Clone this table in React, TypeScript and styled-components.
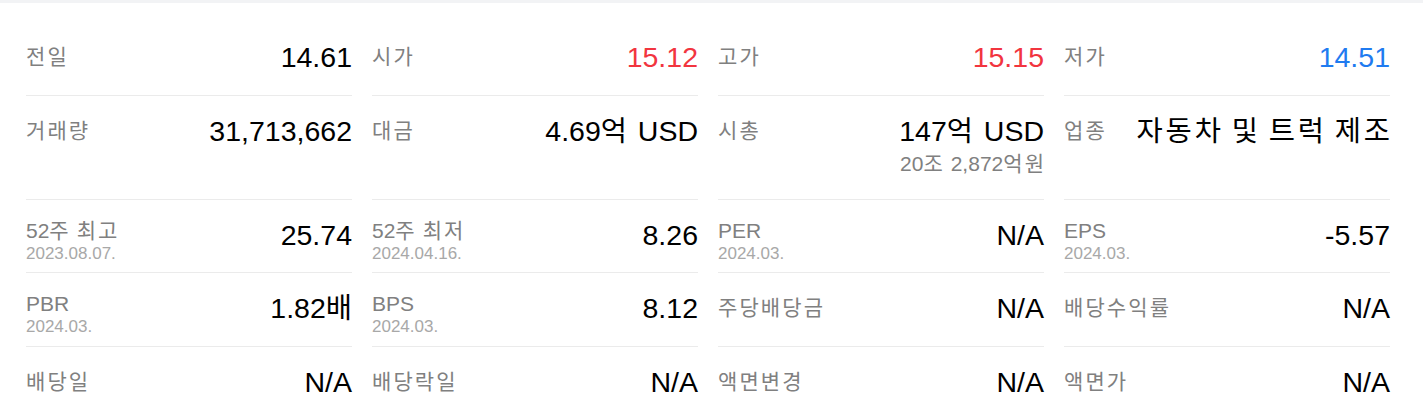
import React from "react";
import styled, { createGlobalStyle } from "styled-components";

const GlobalStyle = createGlobalStyle`
    body {
        margin: 0;
        background: #ffffff;
        font-family: "Liberation Sans", Arial, "Noto Sans CJK KR", sans-serif;
    }
`;

const TopBar = styled.div`
    height: 3px;
    background-color: #f2f3f5;
`;

const Wrapper = styled.div`
    padding: 19px 33px 0 26px;
`;

const Grid = styled.ul`
    list-style: none;
    margin: 0;
    padding: 0;
    display: grid;
    grid-template-columns: repeat(4, 326px);
    column-gap: 20px;
`;

const Cell = styled.li<{ $hasDate?: boolean; $last?: boolean }>`
    display: flex;
    justify-content: space-between;
    align-items: flex-start;
    padding: ${(p) => (p.$hasDate ? "18px 0 8px" : "18px 0 21px")};
    border-bottom: ${(p) => (p.$last ? "none" : "1px solid #ebebeb")};
`;

const LabelBox = styled.div`
    display: flex;
    flex-direction: column;
    flex-shrink: 0;
`;

const Label = styled.span<{ $hasDate?: boolean }>`
    font-size: 21px;
    line-height: ${(p) => (p.$hasDate ? "26px" : "34px")};
    color: #808080;
    white-space: nowrap;
`;

const DateText = styled.span`
    font-size: 17px;
    line-height: 20px;
    color: #a8a8a8;
`;

const ValueBox = styled.div`
    display: flex;
    flex-direction: column;
    align-items: flex-end;
    text-align: right;
`;

const Value = styled.span<{ $tone?: "up" | "down" }>`
    font-size: 28.5px;
    line-height: 34px;
    white-space: nowrap;
    color: ${(p) =>
        p.$tone === "up" ? "#f2353f" : p.$tone === "down" ? "#1f7bf0" : "#000000"};
`;

const SubValue = styled.span`
    margin-top: 2px;
    font-size: 21px;
    line-height: 28px;
    color: #808080;
    white-space: nowrap;
`;

// hangul glyphs of the original font run a bit wider than Noto CJK
const Hangul = styled.span<{ $trail?: boolean }>`
    letter-spacing: 0.1em;
    margin-right: ${(p) => (p.$trail ? "-0.1em" : "0")};
`;

const HANGUL_RUN = /([\u3131-\u318e\uac00-\ud7a3]+)/;

const Txt: React.FC<{ text: string }> = ({ text }) => {
    const parts = text.split(HANGUL_RUN).filter((s) => s !== "");
    return (
        <>
            {parts.map((part, i) =>
                HANGUL_RUN.test(part) ? (
                    <Hangul key={i} $trail={i === parts.length - 1}>
                        {part}
                    </Hangul>
                ) : (
                    <React.Fragment key={i}>{part}</React.Fragment>
                )
            )}
        </>
    );
};

type Item = {
    label: string;
    value: string;
    date?: string;
    sub?: string;
    tone?: "up" | "down";
};

const items: Item[] = [
    { label: "전일", value: "14.61" },
    { label: "시가", value: "15.12", tone: "up" },
    { label: "고가", value: "15.15", tone: "up" },
    { label: "저가", value: "14.51", tone: "down" },
    { label: "거래량", value: "31,713,662" },
    { label: "대금", value: "4.69억 USD" },
    { label: "시총", value: "147억 USD", sub: "20조 2,872억원" },
    { label: "업종", value: "자동차 및 트럭 제조" },
    { label: "52주 최고", value: "25.74", date: "2023.08.07." },
    { label: "52주 최저", value: "8.26", date: "2024.04.16." },
    { label: "PER", value: "N/A", date: "2024.03." },
    { label: "EPS", value: "-5.57", date: "2024.03." },
    { label: "PBR", value: "1.82배", date: "2024.03." },
    { label: "BPS", value: "8.12", date: "2024.03." },
    { label: "주당배당금", value: "N/A" },
    { label: "배당수익률", value: "N/A" },
    { label: "배당일", value: "N/A" },
    { label: "배당락일", value: "N/A" },
    { label: "액면변경", value: "N/A" },
    { label: "액면가", value: "N/A" },
];

const App: React.FC = () => {
    return (
        <>
            <GlobalStyle />
            <TopBar />
            <Wrapper>
                <Grid>
                    {items.map((item, i) => (
                        <Cell key={item.label} $hasDate={!!item.date} $last={i >= items.length - 4}>
                            <LabelBox>
                                <Label $hasDate={!!item.date}>
                                    <Txt text={item.label} />
                                </Label>
                                {item.date && <DateText>{item.date}</DateText>}
                            </LabelBox>
                            <ValueBox>
                                <Value $tone={item.tone}>
                                    <Txt text={item.value} />
                                </Value>
                                {item.sub && (
                                    <SubValue>
                                        <Txt text={item.sub} />
                                    </SubValue>
                                )}
                            </ValueBox>
                        </Cell>
                    ))}
                </Grid>
            </Wrapper>
        </>
    );
};

export default App;
